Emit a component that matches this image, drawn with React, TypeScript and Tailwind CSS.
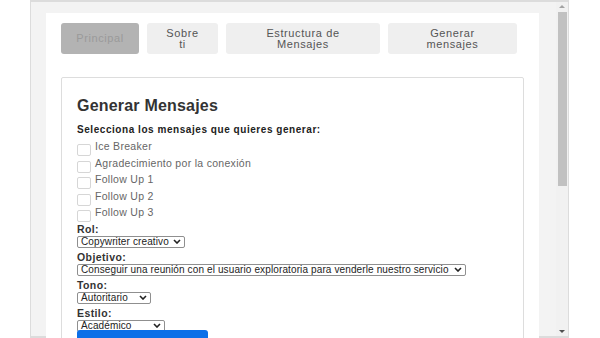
import type { ReactNode } from "react";

const tabs = [
  { label: "Principal", w: "w-[78px]", active: true },
  { label: "Sobre\nti", w: "w-[71px]" },
  { label: "Estructura de\nMensajes", w: "w-[154px]" },
  { label: "Generar\nmensajes", w: "w-[129px]" },
];

const mensajes = ["Ice Breaker", "Agradecimiento por la conexión", "Follow Up 1", "Follow Up 2", "Follow Up 3"];

function Chevron() {
  return (
    <svg width="8" height="5" viewBox="0 0 8 5" className="shrink-0">
      <path d="M1 1l3 3 3-3" fill="none" stroke="#222" strokeWidth="1.6" />
    </svg>
  );
}

function FakeSelect({ value, w }: { value: string; w: string }) {
  return (
    <div
      className={`${w} flex h-[12px] items-center justify-between gap-1 rounded-[2px] border border-[#8f8f8f] bg-white pl-[3px] pr-[3px] text-[10px] leading-none tracking-[0.12px] text-[#222]`}
    >
      <span className="whitespace-nowrap">{value}</span>
      <Chevron />
    </div>
  );
}

function Field({ label, children }: { label: string; children: ReactNode }) {
  return (
    <div className="flex h-[28px] flex-col">
      <p className="h-[15px] pt-[2px] text-[10.5px] font-bold leading-[12px] tracking-[0.4px] text-[#333]">{label}</p>
      {children}
    </div>
  );
}

export default function App() {
  return (
    <div className="h-[338px] w-[600px] overflow-hidden bg-white font-['Liberation_Sans',Arial,sans-serif]">
      <div className="ml-[30px] flex h-[338px] w-[539px] border-x border-y-2 border-[#dcdcdc] bg-[#f3f3f3]">
        <div className="flex-1 pl-[15px] pr-[17px] pt-[11px]">
          <div className="h-[340px] bg-white px-[15px] pt-[10px]">
            <div className="flex gap-2">
              {tabs.map((t) => (
                <div
                  key={t.label}
                  className={`${t.w} flex h-[31px] items-center justify-center whitespace-pre-line rounded-[3px] text-center text-[11px] leading-[11px] tracking-[0.6px] ${
                    t.active ? "bg-[#b3b3b3] text-[#9a9a9a]" : "bg-[#efefef] text-[#555]"
                  }`}
                >
                  {t.label}
                </div>
              ))}
            </div>
            <div className="mt-[23px] h-[280px] w-[463px] rounded-[2px] border border-[#dddddd] bg-white pl-[15px] pt-[19px]">
              <h2 className="text-[16px] font-bold leading-[18px] tracking-[0.2px] text-[#333]">Generar Mensajes</h2>
              <p className="mt-[9px] text-[10px] font-bold leading-[12px] tracking-[0.55px] text-[#222]">
                Selecciona los mensajes que quieres generar:
              </p>
              <div className="mt-[3px] flex flex-col">
                {mensajes.map((m) => (
                  <div key={m} className="flex h-[16.6px] items-start gap-[4px]">
                    <span className="mt-[5px] h-[12px] w-[14px] shrink-0 rounded-[2px] border border-[#d6d6d6] bg-white" />
                    <span className="pt-[1px] text-[10.5px] leading-[12px] tracking-[0.3px] text-[#666]">{m}</span>
                  </div>
                ))}
              </div>
              <div className="mt-[-1px] flex flex-col">
                <Field label="Rol:">
                  <FakeSelect value="Copywriter creativo" w="w-[108px]" />
                </Field>
                <Field label="Objetivo:">
                  <FakeSelect
                    value="Conseguir una reunión con el usuario exploratoria para venderle nuestro servicio"
                    w="w-[389px]"
                  />
                </Field>
                <Field label="Tono:">
                  <FakeSelect value="Autoritario" w="w-[74px]" />
                </Field>
                <Field label="Estilo:">
                  <FakeSelect value="Académico" w="w-[88px]" />
                </Field>
                <button className="mt-[-3px] h-[24px] w-[131px] rounded-t-[3px] bg-[#0b6fe8] pt-[8px] text-[11px] leading-[12px] text-white">
                  Generar mensajes
                </button>
              </div>
            </div>
          </div>
        </div>
        <div className="flex w-[12px] flex-col items-center bg-[#f1f1f1] pt-[2px]">
          <svg width="6" height="4" viewBox="0 0 6 4">
            <path d="M0 4L3 1L6 4Z" fill="#a3a3a3" />
          </svg>
          <div className="mt-[4px] h-[174px] w-[9px] bg-[#c1c1c1]" />
          <div className="flex-1" />
          <svg width="6" height="4" viewBox="0 0 6 4" className="mb-[2px]">
            <path d="M0 0L6 0L3 3Z" fill="#505050" />
          </svg>
        </div>
      </div>
    </div>
  );
}
